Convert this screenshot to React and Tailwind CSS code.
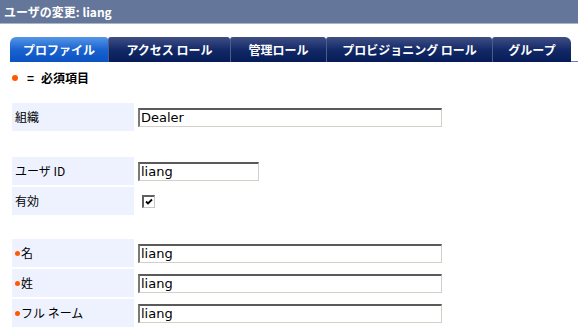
const tabs = [
  { label: 'プロファイル', w: 98, active: true },
  { label: 'アクセス ロール', w: 122 },
  { label: '管理ロール', w: 96 },
  { label: 'プロビジョニング ロール', w: 166 },
  { label: 'グループ', w: 79 },
];

const jp = { fontFamily: '"Noto Sans CJK JP", "DejaVu Sans", sans-serif' };

function Dot() {
  return <span className="inline-block w-[5px] h-[5px] rounded-full bg-[#ff5a00] mr-[1px] align-middle" />;
}

function Field({ value, width = 'w-[304px]' }) {
  return (
    <div
      className={`${width} h-[19px] bg-white border-t-2 border-l-2 border-r border-b border-t-[#5a5a5a] border-l-[#7a7a7a] border-r-[#d4d0c8] border-b-[#d4d0c8] flex items-center pl-[1px] text-[13px] text-black leading-none`}
      style={{ fontFamily: '"DejaVu Sans", sans-serif' }}
    >
      {value}
    </div>
  );
}

function Row({ label, required, children }) {
  return (
    <div className="flex gap-[4px] h-[28px]">
      <div className="w-[122px] bg-[#eef2ff] flex items-center pl-[3px] text-[12px] text-black" style={jp}>
        {required && <Dot />}
        {label}
      </div>
      <div className="flex items-center">{children}</div>
    </div>
  );
}

export default function App() {
  return (
    <div className="w-[578px] h-[329px] bg-white overflow-hidden" style={jp}>
      <div className="h-[24px] bg-[#64769a] border-b border-[#a9b4cc] flex items-center pl-[4px] text-white text-[12px] font-bold">
        ユーザの変更: liang
      </div>

      <div className="flex mt-[13px] pl-[10px] h-[25px]">
        {tabs.map((t, i) => (
          <div
            key={t.label}
            className={`${t.active ? 'bg-gradient-to-b from-[#5596e6] via-[#1a63d0] to-[#0b52c2] rounded-tl-[6px] rounded-tr-[3px]' : 'bg-gradient-to-b from-[#404f85] via-[#142a68] to-[#061c58] rounded-t-[3px] border-l border-[#4d5c8c]'} ${i === tabs.length - 1 ? 'rounded-tr-[6px]' : ''} flex items-center justify-center text-white text-[12px] font-bold shrink-0`}
            style={{ width: t.w }}
          >
            {t.label}
          </div>
        ))}
        <div className="flex-1 border-b border-[#6b7fc0]" />
      </div>

      <div className="mt-[8px] pl-[12px] flex items-center text-[12px] font-bold text-black h-[16px]">
        <span className="inline-block w-[6px] h-[6px] rounded-full bg-[#ff5a00] mr-[9px]" />
        <span className="mr-[7px]">=</span>
        必須項目
      </div>

      <div className="mt-[17px] pl-[12px] flex flex-col gap-[2px]">
        <Row label="組織">
          <Field value="Dealer" />
        </Row>
        <div className="h-[22px]" />
        <Row label="ユーザ ID">
          <Field value="liang" width="w-[121px]" />
        </Row>
        <Row label="有効">
          <div className="ml-[4px] w-[13px] h-[13px] bg-white border-t-2 border-l-2 border-r border-b border-t-[#606060] border-l-[#606060] border-r-[#c8c8c8] border-b-[#c8c8c8] flex items-center justify-center">
            <svg width="8" height="8" viewBox="0 0 8 8">
              <path d="M1 3.5 L3 5.5 L7 1.5" stroke="#000" strokeWidth="1.8" fill="none" />
            </svg>
          </div>
        </Row>
        <div className="h-[20px]" />
        <Row label="名" required>
          <Field value="liang" />
        </Row>
        <Row label="姓" required>
          <Field value="liang" />
        </Row>
        <Row label="フル ネーム" required>
          <Field value="liang" />
        </Row>
      </div>
    </div>
  );
}
